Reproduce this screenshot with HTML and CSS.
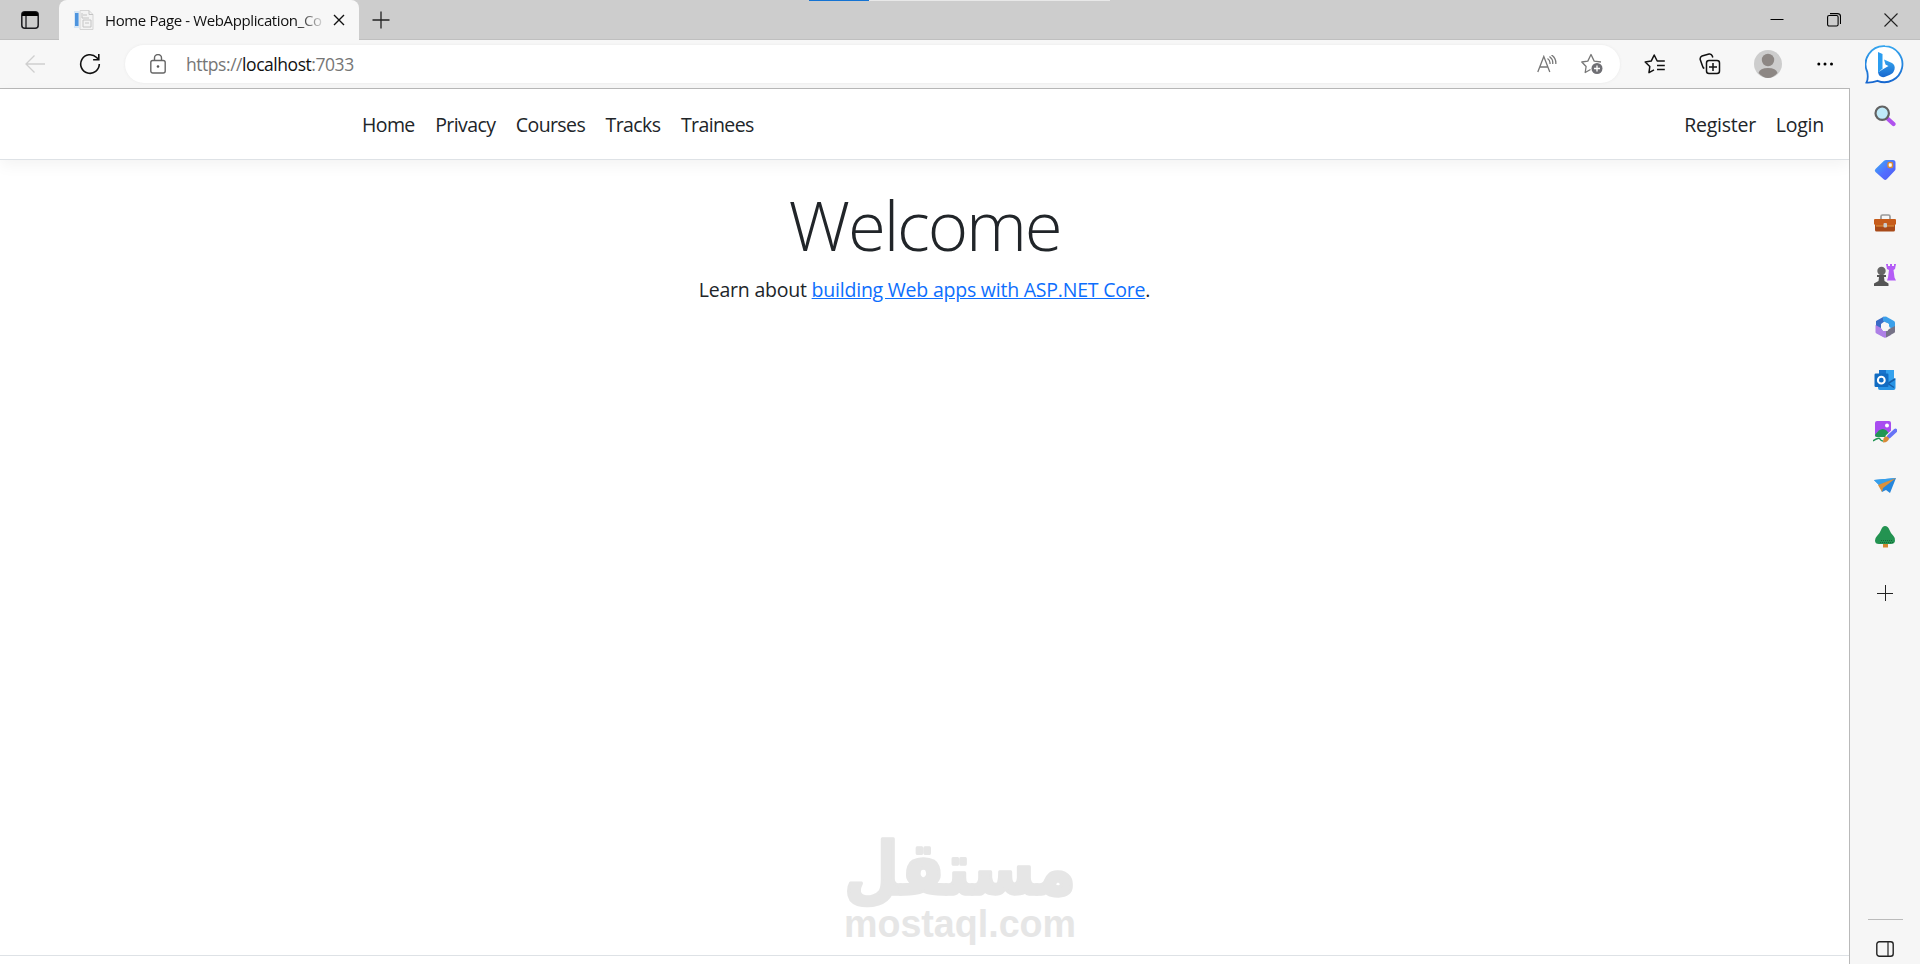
FILE: index.html
```html
<!DOCTYPE html>
<html lang="en">
<head>
    <meta charset="UTF-8">
    <meta name="viewport" content="width=device-width, initial-scale=1.0">
    <title>Home Page - WebApplication_Co</title>
    <link rel="stylesheet" href="styles.css">
</head>
<body>

<div class="tab-strip">
    <div class="tab-actions">
        <svg width="18" height="18" viewBox="0 0 18 18"><rect x=".8" y=".8" width="16.4" height="16.4" rx="3" fill="none" stroke="#1b1b1f" stroke-width="1.5"/><path d="M1 5V3.500Q1 1 3.500 1h11Q17 1 17 3.500V5z" fill="#000"/><path d="M5 5v12" stroke="#1b1b1f" stroke-width="1.300"/></svg>
    </div>
    <div class="tab">
        <svg class="favicon" width="20" height="20" viewBox="0 0 20 20"><path d="M6 .5h9l4 4v15H6z" fill="#f3f3f3" stroke="#d5d5d5"/><path d="M15 .5v4h4M8 3v5h7M9 10h8v7H9zM9 5h4M11 13h4" fill="none" stroke="#c4c4c4"/><path d="M0 1h5v17H0z" fill="#d6e6f5"/><path d="M1 3h3.500v13H1z" fill="#4d94de"/></svg>
        <span class="tab-title">Home Page - WebApplication_Co</span>
        <svg class="tab-close" width="12" height="12" viewBox="0 0 12 12"><path d="M1 1l10 10M11 1L1 11" stroke="#111" stroke-width="1.400"/></svg>
    </div>
    <svg class="new-tab" width="18" height="18" viewBox="0 0 18 18"><path d="M9 .5v17M.5 9h17" stroke="#222" stroke-width="1.300"/></svg>
    <div class="loading"><span></span></div>
    <div class="window-buttons">
        <svg width="14" height="14" viewBox="0 0 14 14"><path d="M.5 6.500h13" stroke="#000"/></svg>
        <svg width="14" height="14" viewBox="0 0 14 14"><rect x=".6" y="2.500" width="10.500" height="10.500" rx="1.500" fill="none" stroke="#000" stroke-width="1.100"/><path d="M3 .6h7.500q3 0 3 3V11" fill="none" stroke="#000" stroke-width="1.100"/></svg>
        <svg width="14" height="14" viewBox="0 0 14 14"><path d="M.5.500l13 13M13.500.500l-13 13" stroke="#222" stroke-width="1.100"/></svg>
    </div>
</div>

<div class="browser">
    <div class="main">
        <div class="toolbar">
            <svg class="back" width="20" height="18" viewBox="0 0 20 18"><path d="M9.500.500L1 9l8.500 8.500M1 9h19" fill="none" stroke="#cfcfcf" stroke-width="1.300"/></svg>
            <svg class="reload" width="22" height="22" viewBox="0 0 22 22"><path d="M20.300 11A9.300 9.300 0 1 1 17.600 4.500L19.500 6.400M19.800 1v5.700h-5.700" fill="none" stroke="#111" stroke-width="1.600"/></svg>
            <div class="address">
                <svg class="lock" width="16" height="20" viewBox="0 0 16 20"><rect x=".8" y="6.500" width="14.400" height="12.500" rx="2" fill="none" stroke="#666" stroke-width="1.400"/><path d="M4.500 6.500V4a3.400 3.400 0 0 1 7 0v2.500" fill="none" stroke="#666" stroke-width="1.400"/><circle cx="8" cy="12.500" r="1.300" fill="#555"/></svg>
                <span class="url">https://<b>localhost</b>:7033</span>
                <svg class="read" width="20" height="18" viewBox="0 0 20 18"><path d="M.8 17L6.800 1.500 12.800 17M3 12h7.800M10.500 3.500q3 2 2.500 5.500M12.500 1.500q3.800 2.800 3.200 7.500M14.500 0q4.800 3.200 4.300 9" fill="none" stroke="#777" stroke-width="1.300"/></svg>
                <svg class="fav-add" width="22" height="22" viewBox="0 0 22 22"><path d="M9.500 16.500l-5.300 3 .9-6L.8 9l6-.9L10 1.500l3.200 6.600 6.800.9" fill="none" stroke="#777" stroke-width="1.300" stroke-linejoin="round"/><circle cx="16" cy="15.500" r="5.500" fill="#6f6f74"/><path d="M16 12.500v6M13 15.500h6" stroke="#fff" stroke-width="1.300"/></svg>
            </div>
            <div class="tools">
                <svg width="22" height="20" viewBox="0 0 22 20"><path d="M10 15.800l-5 2.900.8-6.200L1.200 8l6-.9L10.200 1l3 6h7.600M13 11.500h7.800M13 15.500h7.800" fill="none" stroke="#111" stroke-width="1.500" stroke-linejoin="round"/></svg>
                <svg width="22" height="22" viewBox="0 0 22 22"><rect x="7.500" y="7.500" width="13" height="13" rx="2.500" fill="none" stroke="#111" stroke-width="1.500"/><path d="M14 10v8M10 14h8M5.300 15.500Q4 15 3.500 13L1.200 6.500Q.8 4 3 3L10 1q2.500-.5 3.300 2l.5 1.500" fill="none" stroke="#111" stroke-width="1.500"/></svg>
                <svg width="28" height="28" viewBox="0 0 28 28"><circle cx="14" cy="14" r="14" fill="#cdcdcd"/><circle cx="14" cy="10" r="6.200" fill="#8d8784"/><path d="M4.500 23Q6 18 14 18t9.500 5Q19 28 14 28t-9.500-5z" fill="#8d8784"/></svg>
                <svg width="16" height="4" viewBox="0 0 16 4"><circle cx="1.800" cy="2" r="1.500"/><circle cx="8" cy="2" r="1.500"/><circle cx="14.500" cy="2" r="1.500"/></svg>
            </div>
        </div>

        <div class="page">
            <header>
                <nav>
                    <a>Home</a>
                    <a>Privacy</a>
                    <a>Courses</a>
                    <a>Tracks</a>
                    <a>Trainees</a>
                </nav>
                <nav class="account">
                    <a>Register</a>
                    <a>Login</a>
                </nav>
            </header>
            <main>
                <h1>Welcome</h1>
                <p>Learn about <a class="link">building Web apps with ASP.NET Core</a>.</p>
            </main>
            <footer></footer>
        </div>
    </div>

    <aside>
        <svg class="bing" width="40" height="40" viewBox="0 0 40 40"><defs><linearGradient id="bubble" x1="0" y1="0" x2="0" y2="1"><stop offset="0" stop-color="#36a5ee"/><stop offset="1" stop-color="#1767cf"/></linearGradient></defs><path d="M20 1.200A18 18 0 1 1 12.500 35.800Q7 37.800 1.500 37.500 3.500 34 2.300 27A18.200 18.200 0 0 1 20 1.200z" fill="#fff" stroke="url(#bubble)" stroke-width="1.800"/><path d="M13 7l4.500 2v14.500L13 28z" fill="#2b9df0"/><path d="M19 14.500l8 3.500q3.500 2 2.500 6.500-1 4-5 5.500l-5 2q-5 1-6.500-4.500l4.500-3 6-3.500-3-1.500z" fill="url(#bubble)"/></svg>
        <svg width="22" height="22" viewBox="0 0 22 22"><path d="M14 14l5.500 5" stroke="#b052ee" stroke-width="4.200" stroke-linecap="round"/><circle cx="8.200" cy="8.200" r="6.700" fill="#bfeaf9" stroke="#626262" stroke-width="2.200"/></svg>
        <svg width="22" height="22" viewBox="0 0 22 22"><defs><linearGradient id="tag" x1="0" y1="0" x2="1" y2="1"><stop offset="0" stop-color="#39b2f3"/><stop offset=".55" stop-color="#526dff"/><stop offset="1" stop-color="#4f5df0"/></linearGradient></defs><path d="M12 1h7q2.500 0 2.500 2.500V10q0 1-.8 1.800l-8 8.500q-1.500 1.500-3 0L1.500 13q-1.500-1.500 0-3L10 1.800Q11 1 12 1z" fill="url(#tag)"/><rect x="14" y="3.500" width="4.500" height="5" rx="1.500" fill="#fff" stroke="#d88b35" stroke-width="1.500"/></svg>
        <svg width="22" height="22" viewBox="0 0 22 22"><path d="M7 8V4.500Q7 3 8.500 3h6Q16 3 16 4.500V8" fill="none" stroke="#999" stroke-width="1.700"/><rect x="1" y="9" width="20" height="10.500" rx="1.500" fill="#a84a19"/><path d="M0 8q0-1 1-1h20q1 0 1 1v4l-2 2H2l-2-2z" fill="#c65c1b"/><path d="M2 14h18" stroke="#df963f"/><rect x="9.500" y="11" width="3.500" height="4.500" rx="1" fill="#ccc"/></svg>
        <svg width="24" height="24" viewBox="0 0 24 24"><path d="M13 1h2v2h2V1h2v2h2V1h2l-1 5-1.500 1 1 7.500 1.500 3H14l1-3 1-7.500L14 6z" fill="#b45cf6"/><circle cx="8.500" cy="8" r="4.200" fill="#666"/><path d="M4 12h9v2h-2l.5 4 4 2.500V23H1v-2.500L5.500 18l.5-4H4z" fill="#555"/></svg>
        <svg width="22" height="22" viewBox="0 0 22 22"><path d="M10 .5L2 5v11.500l7 4v-6l-2-2V8l4-3h4z" fill="#3a6cc6"/><path d="M9 1l3-.500 8 4.500q1 .7 1 2v7l-6-3V8L9 5z" fill="#3ba0ea"/><path d="M1.500 9v7q0 1 1 1.500L10 21.500q1 .5 2 0L17 19l-4-4H9L7 12z" fill="#ae80e6"/><path d="M21 10v5.500q0 1-1 1.500l-8 4.500v-6L15 13z" fill="#767387"/><path d="M9 7h4.500l2 4-2 4H9l-2-4z" fill="#f6f6f6"/></svg>
        <svg width="22" height="22" viewBox="0 0 22 22"><rect x="5" y="1" width="15" height="14" fill="#35a2ee"/><path d="M5 1h7v14H5z" fill="#1974cd"/><path d="M4 14l9-1 8.500-4v10q0 2-2 2H6q-2 0-2-2z" fill="#2894e5"/><path d="M21 10l-7 4.500 6 4" fill="none" stroke="#175da7" stroke-width="1.500"/><rect x=".5" y="4.500" width="14" height="13.500" rx="1.200" fill="#126cc2"/><circle cx="7.300" cy="11.200" r="3.400" fill="none" stroke="#fff" stroke-width="2"/></svg>
        <svg width="24" height="24" viewBox="0 0 24 24"><rect x="2" y="1" width="16" height="16" rx="2" fill="#a84df0"/><circle cx="14" cy="5.500" r="2" fill="#fff"/><path d="M2 15q8-12 15 0v2H4q-2 0-2-2z" fill="#219653"/><path d="M0 21q6-4 7-2t3 2" fill="none" stroke="#219653" stroke-width="1.500"/><path d="M15.500 17l7-6.500" stroke="#f6f6f6" stroke-width="6" stroke-linecap="round"/><path d="M16 16.500l6.500-6" stroke="#6773f6" stroke-width="3.800" stroke-linecap="round"/><path d="M10 22.500q0-7 4-6 4 2 0 5-1 1-4 1z" fill="#d88a37"/></svg>
        <svg width="22" height="22" viewBox="0 0 22 22"><path d="M0 6l22-2-6 15-4-3-4 2-2-6z" fill="#2586dc"/><path d="M0 6l22-2L5 11z" fill="#37a0eb"/><path d="M4 11L22 4 9 14l-1 4z" fill="#dc913c"/></svg>
        <svg width="22" height="22" viewBox="0 0 22 22"><path d="M9 15h5v6.500H9z" fill="#d68832"/><path d="M11 0q3 0 4.500 4 1 3 4 6 2 2 1.500 5-.5 3-4 3H5q-4 0-4-3.500Q1 12 3 10q3-3 4-6 1.500-4 4-4z" fill="#239351"/><path d="M7 14.500h12M6 16.500h13" stroke="#176437" stroke-dasharray="1 1"/></svg>
        <svg class="add" width="16" height="16" viewBox="0 0 16 16"><path d="M8.500 0v16M0 8.500h16" stroke="#222"/></svg>
        <div class="divider"></div>
        <svg class="side-toggle" width="18" height="16" viewBox="0 0 18 16"><rect x=".8" y=".8" width="16.400" height="14.400" rx="2.500" fill="none" stroke="#222" stroke-width="1.400"/><path d="M12 1v14" stroke="#333" stroke-width="1.300"/></svg>
    </aside>
</div>

<svg class="watermark" width="236" height="116" viewBox="0 0 236 116">
    <text class="mark-ar" transform="scale(1 1.1)" x="2" y="52" textLength="232" lengthAdjust="spacingAndGlyphs">مستقل</text>
    <text class="mark-en" x="2" y="100" textLength="232" lengthAdjust="spacingAndGlyphs">mostaql.com</text>
</svg>

</body>
</html>
```

FILE: styles.css
```css
* {
    box-sizing: border-box;
}
body {
    margin: 0;
    height: 964px;
    overflow: hidden;
    display: flex;
    flex-direction: column;
    background-color: #fff;
    color: #212529;
    font-family: "Open Sans", "Noto Sans", sans-serif;
}
svg {
    display: block;
    flex: none;
}
.tab-strip {
    height: 40px;
    flex: none;
    display: flex;
    align-items: center;
    background-color: #cdcdcd;
    box-shadow: inset 0 -1px 0 #bfbfbf;
}
.tab-actions {
    width: 59px;
    padding-left: 21px;
}
.tab {
    width: 300px;
    height: 40px;
    display: flex;
    align-items: center;
    padding-left: 15px;
    background-color: #f7f7f7;
    border-radius: 8px 8px 0 0;
}
.tab-title {
    width: 219px;
    margin-left: 11px;
    overflow: hidden;
    white-space: nowrap;
    font-size: 15px;
    letter-spacing: -0.38px;
    color: #111;
    -webkit-mask-image: linear-gradient(to right, #000 193px, transparent 221px);
    mask-image: linear-gradient(to right, #000 193px, transparent 221px);
}
.tab-close {
    margin-left: 9px;
}
.new-tab {
    margin-left: 13px;
}
.loading {
    align-self: flex-start;
    width: 301px;
    height: 1px;
    margin-left: 419px;
    background-color: #e8e8e8;
}
.loading span {
    display: block;
    width: 60px;
    height: 1px;
    background-color: #1473d3;
}
.window-buttons {
    display: flex;
    gap: 43px;
    margin-left: auto;
    margin-right: 22px;
}
.browser {
    flex: 1;
    display: flex;
    background-color: #f7f7f7;
}
.main {
    width: 1850px;
    display: flex;
    flex-direction: column;
}
.toolbar {
    height: 48px;
    flex: none;
    display: flex;
    align-items: center;
}
.back {
    margin-left: 25px;
}
.reload {
    margin-left: 34px;
}
.address {
    width: 1495px;
    height: 38px;
    margin-left: 24px;
    padding: 0 17px 0 25px;
    display: flex;
    align-items: center;
    background-color: #fff;
    border-radius: 19px;
    box-shadow: 0 0 3px #e8e8e8;
}
.url {
    margin-left: 20px;
    margin-right: auto;
    padding-bottom: 1px;
    font-size: 17.5px;
    letter-spacing: -0.45px;
    color: #767676;
}
.url b {
    font-weight: 400;
    color: #111;
}
.fav-add {
    margin-left: 24px;
}
.tools {
    display: flex;
    align-items: center;
    margin-left: 24px;
}
.tools svg:nth-child(2) {
    margin-left: 33px;
}
.tools svg:nth-child(3) {
    margin-left: 33px;
}
.tools svg:nth-child(4) {
    margin-left: 35px;
}
.page {
    flex: 1;
    display: flex;
    flex-direction: column;
    background-color: #fff;
    border-top: 1px solid #b9b9b9;
    border-right: 1px solid #b9b9b9;
}
header {
    height: 71px;
    display: flex;
    justify-content: space-between;
    align-items: center;
    padding: 1px 25px 0 362px;
    border-bottom: 1px solid #dee2e6;
    box-shadow: 0 5px 15px rgba(0,0,0,0.05);
}
nav {
    display: flex;
    gap: 20.5px;
    font-size: 19.5px;
    letter-spacing: -0.6px;
}
.account {
    gap: 20px;
    letter-spacing: -0.25px;
}
main {
    flex: 1;
    padding-top: 21px;
    text-align: center;
}
h1 {
    margin: 0 0 8px;
    font-size: 69px;
    font-weight: 300;
    line-height: 86px;
    letter-spacing: -2.2px;
}
p {
    margin: 0;
    font-size: 19.5px;
    line-height: 30px;
    letter-spacing: -0.22px;
}
.link {
    color: #0d6efd;
    text-decoration: underline;
}
footer {
    height: 9px;
    border-top: 1px solid #dee2e6;
}
aside {
    width: 70px;
    display: grid;
    grid-template-rows: 49px 54px 53px 53px 52px 52.5px 52.5px 52.5px 52.5px 52px 60px 1fr 1px 44px;
    justify-items: center;
    align-items: center;
    padding-right: 1px;
    background-color: #f6f6f6;
}
.bing {
    margin-left: 1px;
}
.divider {
    grid-row: 13;
    width: 35px;
    height: 1px;
    margin-left: 1px;
    background-color: #bbb;
}
.side-toggle {
    grid-row: 14;
    margin-top: 13px;
    margin-left: 1px;
}
.watermark {
    position: absolute;
    left: 842px;
    top: 837px;
    overflow: visible;
    fill: #e6e6e6;
}
.mark-ar {
    font-family: "DejaVu Sans", sans-serif;
    font-size: 66px;
    font-weight: bold;
    stroke: #e6e6e6;
    stroke-width: 3px;
    stroke-linejoin: round;
}
.mark-en {
    font-family: "Liberation Sans", sans-serif;
    font-size: 38px;
    font-weight: bold;
}
```
